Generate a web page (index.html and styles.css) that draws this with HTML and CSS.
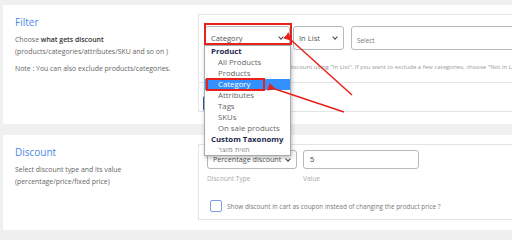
FILE: index.html
```html
<!DOCTYPE html>
<html lang="en">
<head>
    <meta charset="UTF-8">
    <title>Rules</title>
    <link rel="stylesheet" href="styles.css">
</head>
<body>
<div class="wrap">
    <div class="card filter">
        <div class="card-left">
            <h3 class="title">Filter</h3>
            <p class="desc">Choose <b>what gets discount</b><br>(products/categories/attributes/SKU and so on )</p>
            <p class="desc note">Note : You can also exclude products/categories.</p>
        </div>
        <div class="card-right">
            <div class="panel">
                <div class="row-top">
                    <div class="controls">
                        <div class="select sel-type">Category<span class="chev"></span></div>
                        <div class="select sel-list">In List<span class="chev"></span></div>
                        <div class="select sel-multi">Select</div>
                    </div>
                    <p class="help">Select categories to apply the discount using "In List". If you want to exclude a few categories, choose "Not in List".</p>
                </div>
                <div class="row-bottom">
                    <span class="btn"></span>
                </div>
            </div>
        </div>
    </div>

    <div class="card discount">
        <div class="card-left">
            <h3 class="title">Discount</h3>
            <p class="desc">Select discount type and its value<br>(percentage/price/fixed price)</p>
        </div>
        <div class="card-right">
            <div class="panel">
                <div class="fields">
                    <div class="field">
                        <div class="select sel-disc">Percentage discount<span class="chev"></span></div>
                        <label class="lbl">Discount Type</label>
                    </div>
                    <div class="field">
                        <div class="input">5</div>
                        <label class="lbl">Value</label>
                    </div>
                </div>
                <div class="check-row">
                    <span class="checkbox"></span>
                    <span class="check-text">Show discount in cart as coupon instead of changing the product price ?</span>
                </div>
            </div>
        </div>
    </div>
</div>

<ul class="dropdown">
    <li class="group">Product</li>
    <li>All Products</li>
    <li>Products</li>
    <li class="current">Category</li>
    <li>Attributes</li>
    <li>Tags</li>
    <li>SKUs</li>
    <li>On sale products</li>
    <li class="group">Custom Taxonomy</li>
    <li class="rtl">תווית מוצר</li>
</ul>

<svg class="annot" width="512" height="240" viewBox="0 0 512 240">
    <defs>
        <marker id="head" markerWidth="8" markerHeight="8" refX="1" refY="4" orient="auto" markerUnits="userSpaceOnUse">
            <path d="M8,0 L0,4 L8,8 Z" fill="#e8211b"/>
        </marker>
    </defs>
    <rect x="205" y="24" width="86" height="20" fill="none" stroke="#e8211b" stroke-width="2"/>
    <rect x="207" y="79" width="57" height="11" fill="none" stroke="#e8211b" stroke-width="2"/>
    <line x1="352" y1="95" x2="291" y2="40" stroke="#e8211b" stroke-width="1.5" marker-end="url(#head)"/>
    <line x1="344" y1="112" x2="275" y2="89" stroke="#e8211b" stroke-width="1.5" marker-end="url(#head)"/>
</svg>
</body>
</html>
```

FILE: styles.css
```css
* {
    margin: 0;
    padding: 0;
    box-sizing: border-box;
}

body {
    background-color: #f0f0f1;
    font-family: "Open Sans", "Liberation Sans", sans-serif;
    color: #50575e;
    width: 512px;
    height: 240px;
    overflow: hidden;
    position: relative;
}

.wrap {
    padding: 5px 0 0 3px;
}

.card {
    background-color: #fff;
    display: flex;
}

.filter {
    height: 119px;
}

.discount {
    height: 95px;
    margin-top: 11px;
}

.card-left {
    width: 195px;
    flex-shrink: 0;
    padding: 10px 0 0 12px;
}

.title {
    font-size: 10px;
    line-height: 14px;
    font-weight: 400;
    color: #4a86e8;
}

.desc {
    font-size: 6.9px;
    line-height: 12px;
    margin-top: 5px;
    color: #666;
}

.desc b {
    font-weight: 600;
    color: #333;
}

.card-right {
    flex: 1;
    padding-top: 9px;
    min-width: 0;
}

.panel {
    border: 1px solid #e2e4e7;
    border-right: none;
}

.filter .panel {
    height: 98px;
}

.discount .panel {
    height: 76px;
}

.row-top {
    height: 68px;
    padding: 11px 0 0 6px;
    border-bottom: 1px solid #e2e4e7;
    overflow: hidden;
}

.controls {
    display: flex;
    gap: 3px;
}

.select {
    height: 24px;
    border: 1px solid #b4b9be;
    border-radius: 3px;
    font-size: 7.6px;
    line-height: 22px;
    padding-left: 5px;
    color: #555;
    position: relative;
    background: #fff;
    flex-shrink: 0;
}

.chev {
    position: absolute;
    right: 6px;
    top: 8px;
    width: 4px;
    height: 4px;
    border-right: 1px solid #444;
    border-bottom: 1px solid #444;
    transform: rotate(45deg);
}

.sel-type {
    width: 85px;
}

.sel-list {
    width: 51px;
}

.sel-multi {
    width: 220px;
    margin-left: 4px;
    font-size: 6.4px;
    line-height: 28px;
    color: #777;
}

.help {
    font-size: 6px;
    line-height: 10px;
    margin-top: 12px;
    color: #999;
    white-space: nowrap;
}

.row-bottom {
    padding: 13px 0 0 4px;
}

.btn {
    display: block;
    width: 40px;
    height: 15px;
    border-radius: 2px;
    background-color: #2a5f9e;
}

.fields {
    display: flex;
    gap: 6px;
    padding: 5px 0 0 8px;
}

.field {
    display: flex;
    flex-direction: column;
}

.sel-disc {
    width: 90px;
    height: 19px;
    line-height: 17px;
    font-size: 7.2px;
}

.sel-disc .chev {
    top: 6px;
}

.input {
    width: 116px;
    height: 19px;
    border: 1px solid #b4b9be;
    border-radius: 3px;
    font-family: "Liberation Sans", sans-serif;
    font-size: 7.6px;
    line-height: 17px;
    padding-left: 6px;
    color: #555;
}

.lbl {
    font-size: 6.6px;
    line-height: 10px;
    margin-top: 5px;
    color: #aaa;
}

.check-row {
    display: flex;
    align-items: center;
    gap: 5px;
    margin: 16px 0 0 11px;
}

.checkbox {
    width: 12px;
    height: 12px;
    border: 1px solid #7e9fe6;
    border-radius: 2px;
    flex-shrink: 0;
}

.check-text {
    font-size: 6.4px;
    color: #777;
    white-space: nowrap;
}

.dropdown {
    list-style-type: none;
    position: absolute;
    left: 204px;
    top: 45px;
    width: 87px;
    height: 111px;
    background-color: #fff;
    border: 1px solid #a7aaad;
    box-shadow: 1px 2px 4px rgba(0, 0, 0, 0.25);
}

.dropdown li {
    height: 11px;
    line-height: 11px;
    font-size: 7.8px;
    padding-left: 13px;
    color: #666;
}

.dropdown .group {
    padding-left: 6px;
    font-weight: 700;
    color: #1d2b4f;
}

.dropdown .current {
    background-color: #3390ff;
    color: #fff;
}

.dropdown .rtl {
    font-family: "DejaVu Sans", sans-serif;
    font-size: 7px;
    color: #888;
}

.annot {
    position: absolute;
    left: 0;
    top: 0;
    pointer-events: none;
}
```
